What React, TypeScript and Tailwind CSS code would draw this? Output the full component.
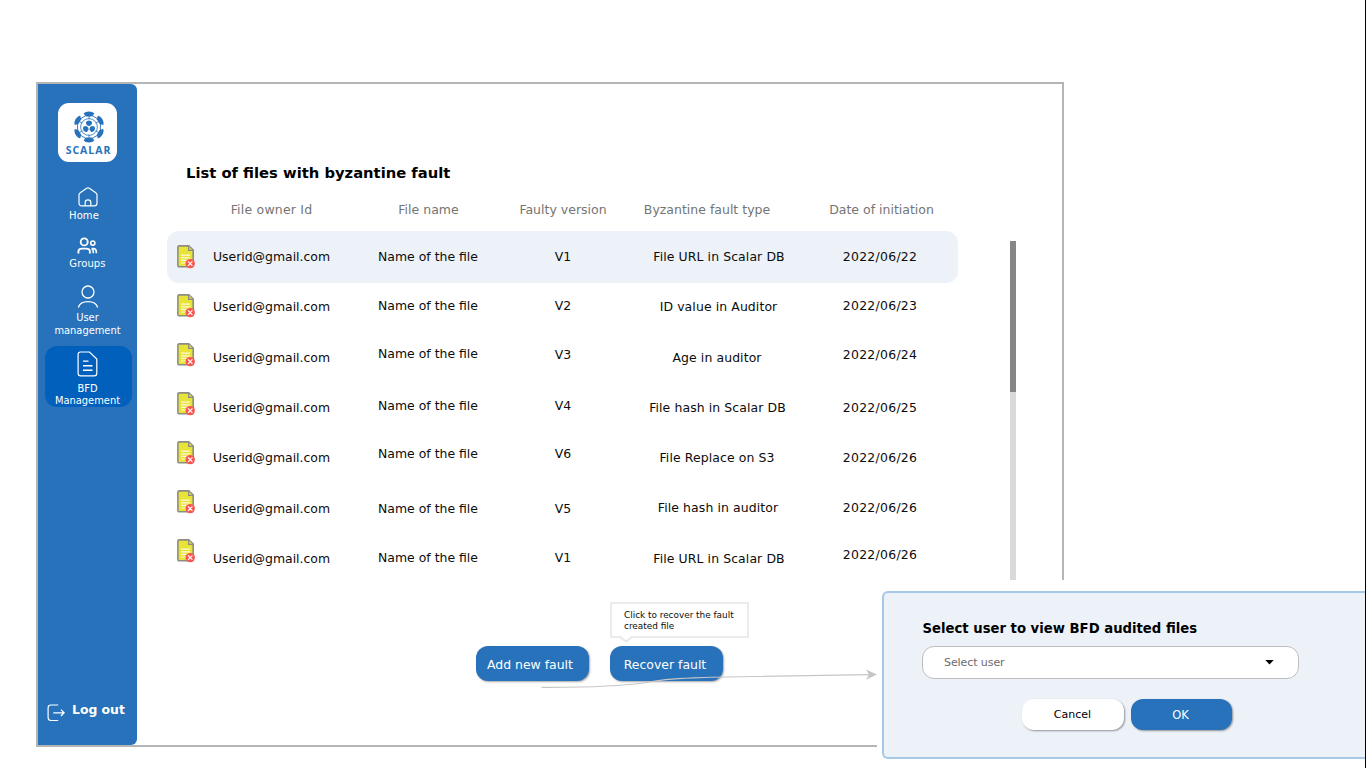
import React from 'react';

type Cell = { text: string; pos: string };
type Row = { icon: string; owner: Cell; name: Cell; version: Cell; fault: Cell; date: Cell };

const c = (text: string, pos: string): Cell => ({ text, pos });
const owner = 'Userid@gmail.com';
const file = 'Name of the file';

const rows: Row[] = [
  { icon: 'mt-[14px]', owner: c(owner, 'mt-4'), name: c(file, 'mt-4'), version: c('V1', 'mt-4'), fault: c('File URL in Scalar DB', 'mt-4 pl-[2px]'), date: c('2022/06/22', 'mt-4') },
  { icon: 'mt-[13px]', owner: c(owner, 'mt-4'), name: c(file, 'mt-[15px]'), version: c('V2', 'mt-[15px]'), fault: c('ID value in Auditor', 'mt-4 pl-[1px]'), date: c('2022/06/23', 'mt-[15px]') },
  { icon: 'mt-[12px]', owner: c(owner, 'mt-[17px]'), name: c(file, 'mt-[13px]'), version: c('V3', 'mt-[14px]'), fault: c('Age in auditor', 'mt-[17px] pr-[2px]'), date: c('2022/06/24', 'mt-[14px]') },
  { icon: 'mt-[11px]', owner: c(owner, 'mt-[17px]'), name: c(file, 'mt-[15px]'), version: c('V4', 'mt-[15px]'), fault: c('File hash in Scalar DB', 'mt-[17px] pr-[1px]'), date: c('2022/06/25', 'mt-[17px]') },
  { icon: 'mt-[10px]', owner: c(owner, 'mt-[17px]'), name: c(file, 'mt-[13px]'), version: c('V6', 'mt-[13px]'), fault: c('File Replace on S3', 'mt-[17px] pr-[2px]'), date: c('2022/06/26', 'mt-[17px]') },
  { icon: 'mt-[9px]', owner: c(owner, 'mt-[18px]'), name: c(file, 'mt-[18px]'), version: c('V5', 'mt-[18px]'), fault: c('File hash in auditor', 'mt-[17px]'), date: c('2022/06/26', 'mt-[17px]') },
  { icon: 'mt-[8px]', owner: c(owner, 'mt-[18px]'), name: c(file, 'mt-[17px]'), version: c('V1', 'mt-[17px]'), fault: c('File URL in Scalar DB', 'mt-[18px] pl-[2px]'), date: c('2022/06/26', 'mt-[14px]') },
];

function ScalarLogo() {
  return (
    <svg width="32" height="32" viewBox="-16 -16 32 32" className="mt-[8px]" fill="#2772bb">
      <path d="M0 -13.2 11.4 -6.6V6.6L0 13.2-11.4 6.6V-6.6Z" fill="none" stroke="#2772bb" strokeWidth="0.9" />
      {[0, 60, 120, 180, 240, 300].map((a) => (
        <g key={a} transform={`rotate(${a})`}>
          <path d="M-5.4 -13.3C-3.4 -16.2 3.4 -16.2 5.4 -13.3L2.8 -10.6H-2.8Z" />
          <path d="M0 -11V-7.6" stroke="#2772bb" strokeWidth="0.8" />
        </g>
      ))}
      <circle r="8.4" fill="none" stroke="#2772bb" strokeWidth="0.8" />
      {[0, 120, 240].map((a) => (
        <path key={a} transform={`rotate(${a})`} d="M-3.2 -4.4C-2.6 -5.6 -1.2 -6.3 0 -6.4 1.2 -6.3 2.6 -5.6 3.2 -4.4L2.2 -1.8 0 -.9-2.2 -1.8Z" />
      ))}
    </svg>
  );
}

function FaultyFileIcon({ className }: { className: string }) {
  return (
    <svg width="18" height="24" viewBox="0 0 18 24" className={`ml-[10px] ${className}`}>
      <path d="M2.2 .9H11.8L16.2 5.2V20.4Q16.2 21.8 14.8 21.8H2.2Q.9 21.8 .9 20.4V2.2Q.9 .9 2.2 .9Z" fill="#e8e337" stroke="#8c8c84" strokeWidth="1.6" />
      <path d="M11.6 1V5.4H16" fill="#dcd84a" stroke="#8c8c84" strokeWidth="1.2" />
      <path d="M4 10.2H13M4 12.8H13M4 15.4H11M4 18H9" stroke="#fbfae0" strokeWidth="1.2" />
      <circle cx="13.2" cy="18.6" r="4.7" fill="#f9564f" />
      <path d="m11 16.4 4.4 4.4m0-4.4L11 20.8" stroke="white" strokeWidth="1.2" />
    </svg>
  );
}

function Sidebar() {
  return (
    <nav className="flex w-[99px] shrink-0 flex-col items-center rounded-r-[6px] bg-[#2772bb] text-[10px] text-white">
      <div className="mt-[19px] flex h-[59px] w-[59px] shrink-0 flex-col items-center rounded-[11px] bg-white pl-[2px]">
        <ScalarLogo />
        <span className="mt-[2px] font-['Open_Sans'] text-[10.5px] leading-[10px] font-bold tracking-[0.95px] text-[#2772bb]">SCALAR</span>
      </div>
      <svg width="20" height="20" viewBox="0 0 20 20" fill="none" stroke="white" strokeWidth="1.2" className="mt-[25px]">
        <path d="M1 8.1Q1 6.6 2.2 5.8L8.7 1.2Q10 .4 11.3 1.2L17.8 5.8Q19 6.6 19 8.1V16Q19 18.9 16.1 18.9H3.9Q1 18.9 1 16ZM7.2 18.8V15.5Q7.2 12.8 10 12.8T12.8 15.5V18.8" />
      </svg>
      <span className="mt-[2px] pr-[7px] leading-[13px] tracking-[0.1px]">Home</span>
      <svg width="21" height="18" viewBox="0 0 21 18" fill="none" stroke="white" strokeWidth="1.9" className="mt-[15px]">
        <circle cx="7.2" cy="4.9" r="3.5" />
        <path d="M1.4 16.5V14.8Q1.4 11.6 5 11.6H9.3Q12.9 11.6 12.9 14.8V16.5" />
        <circle cx="15.8" cy="6.1" r="2.1" strokeWidth="1.6" />
        <path d="M14.6 11.5H16Q19.3 11.5 19.3 14.5V16.3M16.3 16.3V14.4Q16.3 12.6 14.5 11.6" strokeWidth="1.6" />
      </svg>
      <span className="mt-[2px] leading-[13px] tracking-[0.1px]">Groups</span>
      <svg width="22" height="24" viewBox="0 0 22 24" fill="none" stroke="white" strokeWidth="1.3" className="mt-[15px]">
        <circle cx="11" cy="7" r="6" />
        <path d="M1.3 22.5C2.5 18.8 6.2 16.7 11 16.7S19.5 18.8 20.7 22.5" />
      </svg>
      <span className="mt-[3px] text-center text-[9.9px] leading-[12.5px]">User<br />management</span>
      <div className="mt-[9px] ml-[1px] flex h-[61px] w-[87px] shrink-0 flex-col items-center rounded-[12px] bg-[#0260bd] pr-px">
        <svg width="21" height="26" viewBox="0 0 21 26" fill="none" stroke="white" strokeWidth="1.2" className="mt-[5px] shrink-0">
          <path d="M3.5 1H12.5L19.8 8V22.3Q19.8 24.9 17.2 24.9H3.7Q1.1 24.9 1.1 22.3V3.6Q1.1 1 3.5 1Z" />
          <path d="M6 10.1H11.5M6 14.7H15.5M6 19.2H15.5" strokeWidth="1.4" />
        </svg>
        <span className="mt-[6px] text-center text-[9.9px] leading-[12px]">BFD<br />Management</span>
      </div>
      <div className="mt-auto mb-[23px] flex w-full items-center gap-[7px] pl-[9px]">
        <svg width="18" height="18" viewBox="0 0 18 18" fill="none" stroke="white" strokeWidth="1.2" className="mt-[4px]">
          <path d="M11.2 1H4Q1.1 1 1.1 3.9V13.6Q1.1 16.5 4 16.5H11.2M6.3 8.8H17M13.9 5.6 17.2 8.8 13.9 12" />
        </svg>
        <span className="mb-[2px] text-[12.4px] leading-[16px] font-bold">Log out</span>
      </div>
    </nav>
  );
}

function TableCell({ cell, className = '' }: { cell: Cell; className?: string }) {
  return <span className={`text-center leading-5 whitespace-nowrap ${cell.pos} ${className}`}>{cell.text}</span>;
}

function FilesTable() {
  return (
    <section className="ml-[30px] w-[791px]">
      <h1 className="mt-[79px] ml-[19px] text-[14.75px] leading-5 font-bold">List of files with byzantine fault</h1>
      <div className="mt-[17px] grid grid-cols-[39px_131px_182px_88px_200px_149px] text-center text-[12.5px] leading-5 whitespace-nowrap text-[#747474]">
        <span />
        <span className="tracking-[0.2px]">File owner Id</span>
        <span className="pl-px">File name</span>
        <span>Faulty version</span>
        <span>Byzantine fault type</span>
        <span>Date of initiation</span>
      </div>
      <div className="mt-[11px] text-[12.45px] text-[#0c0c0c]">
        {rows.map((r, i) => (
          <div key={i} className={`grid grid-cols-[39px_131px_182px_88px_222px_102px] items-start ${i === 0 ? '-mb-[2px] h-[52px] rounded-[12px] bg-[#edf2f8]' : 'h-[50px]'}`}>
            <FaultyFileIcon className={r.icon} />
            <TableCell cell={r.owner} />
            <TableCell cell={r.name} />
            <TableCell cell={r.version} />
            <TableCell cell={r.fault} className="tracking-[0.1px]" />
            <TableCell cell={r.date} className="tracking-[0.28px]" />
          </div>
        ))}
      </div>
      <div className="mt-[65px] ml-[309px] flex gap-[21px] text-[12.45px] text-white">
        <button className="h-[35px] w-[113px] rounded-[12px] bg-[#2772bb] pt-[3px] pr-[5px] shadow-[1px_1px_2px_rgba(0,0,0,0.35)]">Add new fault</button>
        <div className="relative">
          <button className="h-[35px] w-[113px] rounded-[12px] bg-[#2772bb] pt-[3px] pr-[3px] shadow-[1px_1px_2px_rgba(0,0,0,0.35)]">Recover fault</button>
          <div className="absolute -top-[44px] left-0 h-[36px] w-[139px] border-[2.5px] border-[#ebebeb] bg-white pt-[6px] pl-[12px] text-left text-[8.9px] leading-[10.5px] whitespace-nowrap text-[#0c0c0c]">
            Click to recover the fault<br />created file
            <svg width="12" height="7" viewBox="0 0 12 7" className="absolute top-[32px] left-[8px]">
              <path d="M0 0H12L6 5.5Z" fill="white" />
              <path d="M0 1 6 5.5 12 1" fill="none" stroke="#e8e8e8" strokeWidth="1.8" />
            </svg>
          </div>
        </div>
      </div>
    </section>
  );
}

function SelectUserDialog() {
  return (
    <div className="absolute top-[580px] left-[877px] h-[188px] w-[489px] bg-white pt-[11px] pl-[5px]">
      <div className="h-[168px] rounded-l-[6px] border-y-2 border-l-2 border-[#a5c8e8] bg-[#edf2f9] pl-[38px]">
        <h2 className="pt-[26px] pl-[0.5px] text-[13.22px] leading-5 font-bold">Select user to view BFD audited files</h2>
        <div className="mt-[7px] flex h-[33px] w-[377px] items-center justify-between rounded-[12px] border border-[#bdbdbd] bg-white pr-[24px] pl-[21px] text-[11px] text-[#6b6b6b]">
          <span className="pt-px tracking-[-0.08px]">Select user</span>
          <svg width="9" height="5" viewBox="0 0 9 5"><path d="M.3 0H8.7L4.5 4.6Z" fill="black" /></svg>
        </div>
        <div className="mt-[20px] ml-[100px] flex gap-[7px] text-[11px]">
          <button className="h-[31px] w-[102px] rounded-[12px] bg-white pt-[2px] pr-px shadow-[1px_1px_2px_rgba(0,0,0,0.4)]">Cancel</button>
          <button className="h-[31px] w-[101px] rounded-[12px] bg-[#2772bb] pt-[3px] pr-[2px] text-[11.5px] text-white shadow-[1px_1px_2px_rgba(0,0,0,0.4)]">OK</button>
        </div>
      </div>
    </div>
  );
}

export default function App() {
  return (
    <div className="relative h-[768px] w-[1366px] overflow-hidden bg-white pt-[82px] pl-[36px] font-['DejaVu_Sans',sans-serif] text-black">
      <div className="flex h-[665px] w-[1028px] border-2 border-[#b5b5b5]">
        <Sidebar />
        <FilesTable />
        <div className="mt-[157px] ml-[52px] h-[400px] w-[6px] bg-[#d9d9d9]">
          <div className="h-[151px] bg-[#868686]" />
        </div>
      </div>
      <SelectUserDialog />
      <svg width="340" height="24" viewBox="0 0 340 24" className="absolute top-[666px] left-[540px]" fill="none">
        <path d="M1.5 21.3C45 21.5 83 20 106 16.5C130 11.5 175 11 215 10.5Q270 9.5 329 8.7" stroke="#c6c6c6" strokeWidth="1.2" />
        <path d="M337 8.6 326 3.4 329 8.6 326 13.8Z" fill="#c6c6c6" />
      </svg>
      <div className="absolute top-0 right-0 h-full w-px bg-black" />
    </div>
  );
}
